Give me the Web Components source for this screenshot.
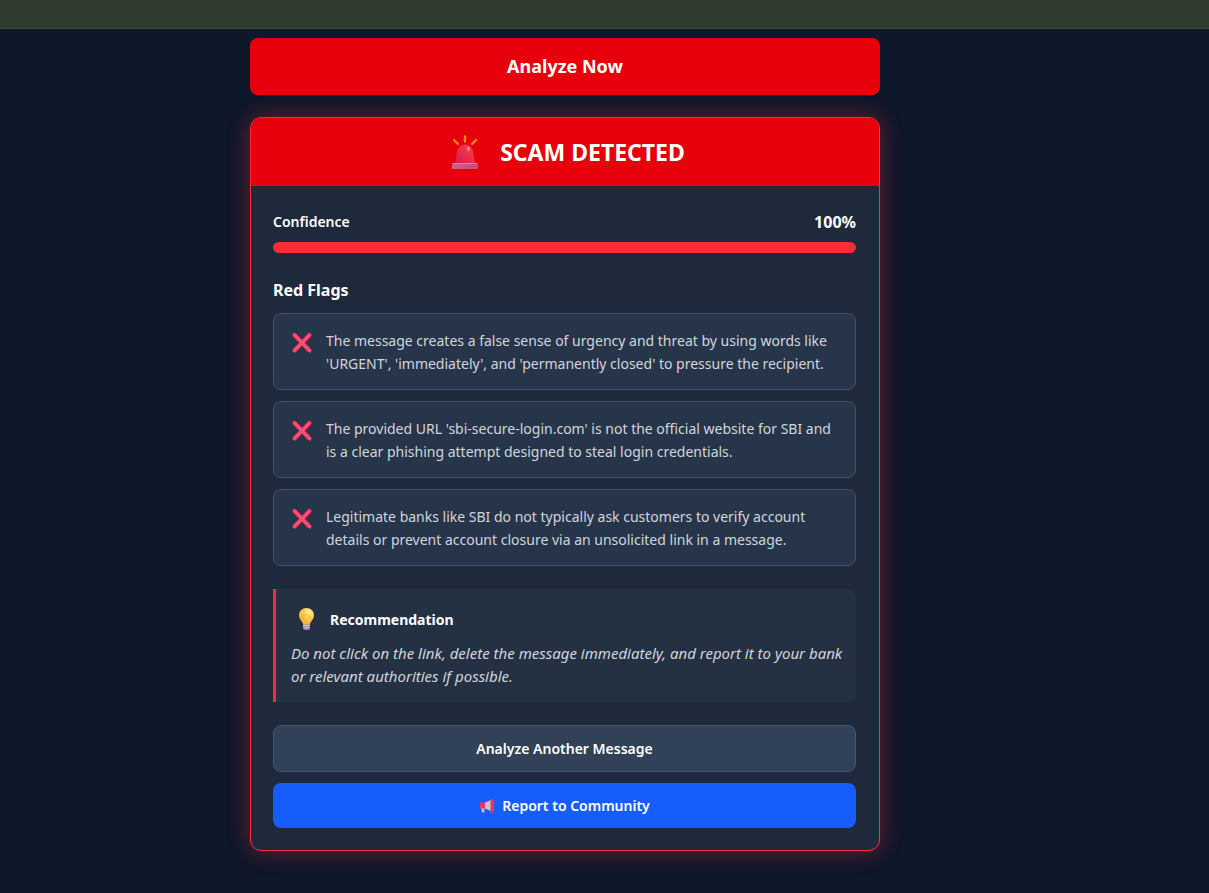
<!DOCTYPE html>
<html lang="en">
<head>
<meta charset="utf-8">
<meta name="viewport" content="width=device-width, initial-scale=1">
<title>Scam Analyzer</title>
<style>
  body { margin: 0; min-height: 100vh; background: #0f172a; color: #fff; font-family: "Noto Sans", sans-serif; font-size: 14px; }
</style>
</head>
<body>
<scam-page>
  <action-button kind="primary">Analyze Now</action-button>
  <result-card>
    <span slot="title">SCAM DETECTED</span>
    <confidence-meter value="100">Confidence</confidence-meter>
    <flag-list>
      <span slot="heading">Red Flags</span>
      <red-flag>The message creates a false sense of urgency and threat by using words like 'URGENT', 'immediately', and 'permanently closed' to pressure the recipient.</red-flag>
      <red-flag>The provided URL 'sbi-secure-login.com' is not the official website for SBI and is a clear phishing attempt designed to steal login credentials.</red-flag>
      <red-flag>Legitimate banks like SBI do not typically ask customers to verify account details or prevent account closure via an unsolicited link in a message.</red-flag>
    </flag-list>
    <tip-box>
      <span slot="heading">Recommendation</span>
      Do not click on the link, delete the message immediately, and report it to your bank or relevant authorities if possible.
    </tip-box>
    <action-button slot="actions" kind="secondary">Analyze Another Message</action-button>
    <action-button slot="actions" kind="report"><megaphone-icon></megaphone-icon>Report to Community</action-button>
  </result-card>
</scam-page>

<script>
const define = (name, html, setup) => {
  const template = document.createElement('template');
  template.innerHTML = html;
  customElements.define(name, class extends HTMLElement {
    constructor() {
      super();
      this.attachShadow({ mode: 'open' }).append(template.content.cloneNode(true));
    }
    connectedCallback() { if (setup) setup(this, this.shadowRoot); }
  });
};

define('scam-page', `
<style>
  :host { display: block; }
  header { height: 28px; background: #303d2e; border-bottom: 1px solid #3d4a40; }
  main { padding: 9px 79px 42px 0; }
  .column { max-width: 630px; margin: 0 auto; display: flex; flex-direction: column; gap: 22px; }
</style>
<header></header>
<main><div class="column"><slot></slot></div></main>`);

define('action-button', `
<style>
  :host { display: block; }
  button { display: flex; align-items: center; justify-content: center; gap: 7px; width: 100%; box-sizing: border-box; margin: 0; padding: 0 16px; border: 0; border-radius: 8px; color: #fff; font: 600 14px/23px "Noto Sans", sans-serif; cursor: pointer; }
  :host([kind=primary]) button { min-height: 57px; background: #e7000b; font-size: 18px; font-weight: 700; }
  :host([kind=secondary]) button { min-height: 47px; background: #314158; border: 1px solid #45556c; }
  :host([kind=report]) button { min-height: 45px; background: #155dfc; }
</style>
<button type="button"><slot></slot></button>`);

define('result-card', `
<style>
  :host { display: block; border: 1px solid #fb2c36; border-radius: 11px; overflow: hidden; background: #1e293b; box-shadow: 0 0 22px rgba(251, 44, 54, .4); }
  header { display: flex; align-items: center; justify-content: center; gap: 15px; height: 68px; background: #e7000b; }
  h2 { margin: 0; font-size: 23px; line-height: 30px; font-weight: 700; }
  svg { display: block; width: 40px; height: 40px; }
  .body { padding: 22px 23px 22px 22px; display: flex; flex-direction: column; gap: 23px; }
  .actions { display: flex; flex-direction: column; gap: 11px; }
</style>
<header>
  <svg viewBox="0 0 40 40" aria-hidden="true">
    <defs>
      <linearGradient id="dome" x1="0" x2="1" y1="1" y2="0"><stop offset="0" stop-color="#c81e55"/><stop offset=".5" stop-color="#f02d4a"/><stop offset="1" stop-color="#ee4459"/></linearGradient>
      <linearGradient id="base" x1="0" x2="1"><stop offset="0" stop-color="#ce6384"/><stop offset="1" stop-color="#c94770"/></linearGradient>
    </defs>
    <path d="M20 4.500v5M9 8l4 4M31 8l-4 4" stroke="#f58220" stroke-width="2.400" stroke-linecap="round"/>
    <path d="M10 31l2-11c1-5 4-7.500 8-7.500s7 2.500 8 7.500l2 11z" fill="url(#dome)"/>
    <ellipse cx="23.500" cy="17" rx="1.800" ry="2.400" fill="#ff8c96" opacity=".8"/>
    <rect x="7" y="31" width="26" height="6" rx="1" fill="url(#base)"/>
    <path d="M8 31.500h24" stroke="#dd82a0" stroke-width="1"/>
  </svg>
  <h2><slot name="title"></slot></h2>
</header>
<div class="body"><slot></slot><div class="actions"><slot name="actions"></slot></div></div>`);

define('confidence-meter', `
<style>
  :host { display: block; }
  .row { display: flex; justify-content: space-between; align-items: center; height: 27px; margin-bottom: 7px; }
  .label { font-weight: 600; }
  .value { font-size: 16px; font-weight: 700; }
  .track { height: 11px; border-radius: 6px; overflow: hidden; background: #314158; }
  .fill { height: 100%; border-radius: 6px; background: #ff2b36; }
</style>
<div class="row"><span class="label" id="label"><slot></slot></span><span class="value"></span></div>
<div class="track" role="progressbar" aria-labelledby="label" aria-valuemin="0" aria-valuemax="100"><div class="fill"></div></div>`,
(host, root) => {
  const value = host.getAttribute('value');
  root.querySelector('.value').textContent = value + '%';
  root.querySelector('.fill').style.width = value + '%';
  root.querySelector('.track').setAttribute('aria-valuenow', value);
});

define('flag-list', `
<style>
  :host { display: block; }
  h3 { margin: 0 0 9px; font-size: 16px; line-height: 28px; font-weight: 700; }
  .list { display: flex; flex-direction: column; gap: 11px; }
</style>
<h3><slot name="heading"></slot></h3>
<div class="list" role="list"><slot></slot></div>`);

define('red-flag', `
<style>
  :host { display: flex; gap: 11px; padding: 15px 15px 14px; border: 1px solid #435269; border-radius: 8px; background: #27354a; color: #d1d5dc; line-height: 23px; }
  svg { flex: none; width: 26px; height: 28px; }
  p { margin: 0; }
</style>
<svg viewBox="0 0 26 28" aria-hidden="true">
  <path d="M5.500 6l15 15.500M20.500 6l-15 15.500" stroke="#f23558" stroke-width="4.200" stroke-linecap="round"/>
  <path d="M5.500 6l15 15.500M20.500 6l-15 15.500" stroke="#ff4f78" stroke-width="2.600" stroke-linecap="round"/>
</svg>
<p><slot></slot></p>`, host => host.setAttribute('role', 'listitem'));

define('tip-box', `
<style>
  :host { display: block; padding: 15px 12px 14px 15px; border-left: 3px solid #fb2c36; border-radius: 0 8px 8px 0; background: #243143; }
  .head { display: flex; align-items: center; gap: 7px; height: 30px; margin-bottom: 8px; }
  h4 { margin: 0; font-size: 14px; font-weight: 700; }
  svg { width: 32px; height: 24px; }
  p { margin: 0; color: #d1d5dc; font-size: 15px; font-style: italic; line-height: 23px; }
</style>
<div class="head">
  <svg viewBox="0 0 32 24" aria-hidden="true">
    <defs><radialGradient id="glass" cx=".65" cy=".25" r=".8"><stop offset="0" stop-color="#fff3b0"/><stop offset=".4" stop-color="#ffcf52"/><stop offset="1" stop-color="#f8a92c"/></radialGradient></defs>
    <path d="M15.500 1c-4.200 0-7.500 3.100-7.500 7.200 0 4.500 3.700 5.600 4.200 9.800h6.600c.5-4.200 4.200-5.300 4.200-9.800C23 4.100 19.700 1 15.500 1z" fill="url(#glass)"/>
    <circle cx="15.500" cy="10" r="3" fill="none" stroke="#f5b03c" stroke-width="1" opacity=".7"/>
    <path d="M12 17.500h7v3.500q0 2-3.500 2t-3.500-2z" fill="#9a83b4"/>
    <path d="M12 18.500h7M12.500 20.700h6" stroke="#d5c6df" stroke-width="1"/>
  </svg>
  <h4><slot name="heading"></slot></h4>
</div>
<p><slot></slot></p>`);

define('megaphone-icon', `
<style>
  :host { display: block; width: 16px; height: 16px; }
  svg { display: block; width: 16px; height: 16px; }
</style>
<svg viewBox="0 0 16 16" aria-hidden="true">
  <path d="M2 9.500h3.500v5H3z" fill="#c3b6d0"/>
  <path d="M1 4.500h5v6H1z" fill="#ee3566"/>
  <path d="M6 4.500L12 2v11l-6-2.500z" fill="#cbc0d6"/>
  <rect x="11.500" y="1" width="3.500" height="14" rx="1.700" fill="#e83560"/>
  <path d="M15 6q1 1.500 0 3z" fill="#a53478"/>
</svg>`);
</script>
</body>
</html>
